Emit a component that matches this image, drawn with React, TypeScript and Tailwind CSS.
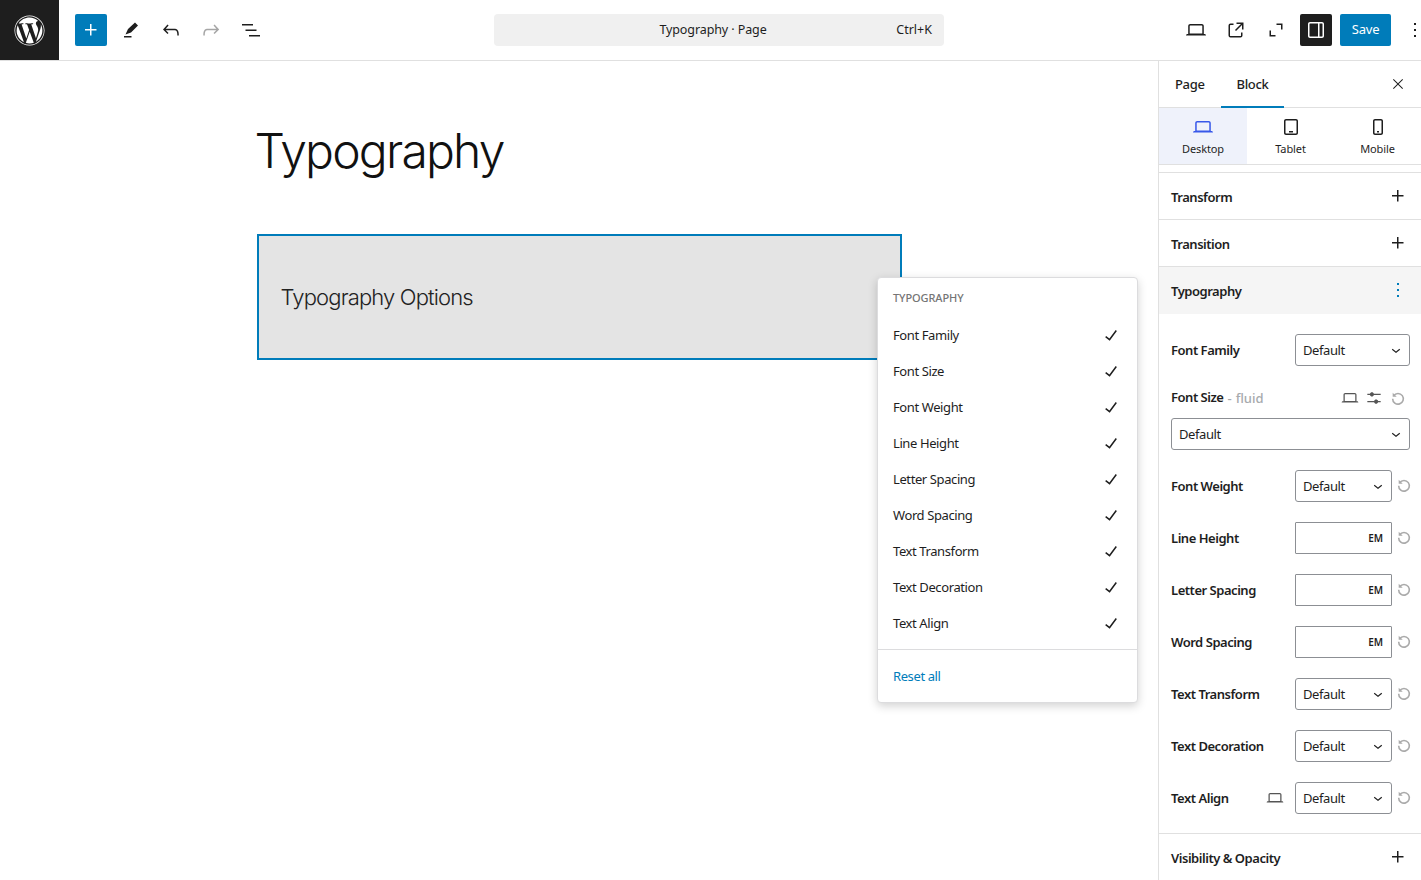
import type { ReactNode } from 'react';
import { FaWordpress } from 'react-icons/fa';

const paths = {
  plus: 'M11 12.5V17.5H12.5V12.5H17.5V11H12.5V6H11V11H6V12.5H11Z',
  pencil: 'M19 7.500 16 4.500 9 11 6.500 16.500 12 14.500zM5 18h7.500v1.500H5z',
  undo: 'M18.3 11.7c-.6-.6-1.4-.9-2.3-.9H6.7l2.9-3.3-1.1-1-4.5 5L8.5 16l1-1-2.7-2.7H16c.5 0 .9.2 1.3.5 1 1 1 3.4 1 4.5v.3h1.5v-.2c0-1.5 0-4.3-1.5-5.7z',
  redo: 'M15.6 6.5l-1.1 1 2.9 3.3H8c-.9 0-1.7.3-2.3.9-1.4 1.5-1.4 4.2-1.4 5.6v.2h1.5v-.3c0-1.1 0-3.5 1-4.5.3-.3.7-.5 1.3-.5h9.2L14.5 15l1.1 1.1 4.6-4.6-4.6-5z',
  list: 'M3 6h11v1.5H3V6Zm3.5 5.5h11V13h-11v-1.5ZM21 17H10v1.5h11V17Z',
  desktop: 'M20.5 16h-.7V8c0-1.1-.9-2-2-2H6.2c-1.1 0-2 .9-2 2v8h-.7c-.8 0-1.5.7-1.5 1.5h20c0-.8-.7-1.5-1.5-1.5zM5.700 8c0-.3.2-.5.5-.5h11.600c.3 0 .5.2.5.5v7.600H5.700V8z',
  tablet: 'M17 4H7c-1.1 0-2 .9-2 2v12c0 1.1.9 2 2 2h10c1.1 0 2-.9 2-2V6c0-1.1-.9-2-2-2zm.5 14c0 .3-.2.5-.5.5H7c-.3 0-.5-.2-.5-.5V6c0-.3.2-.5.5-.5h10c.3 0 .5.2.5.5v12zm-7.5-.5h4V16h-4v1.5z',
  mobile: 'M15 4H9c-1.1 0-2 .9-2 2v12c0 1.1.9 2 2 2h6c1.1 0 2-.9 2-2V6c0-1.1-.9-2-2-2zm.5 14c0 .3-.2.5-.5.5H9c-.3 0-.5-.2-.5-.5V6c0-.3.2-.5.5-.5h6c.3 0 .5.2.5.5v12zm-4.5-.5h2V16h-2v1.5z',
  external: 'M19.5 4.5h-7V6h4.44l-5.97 5.97 1.06 1.06L18 7.06v4.44h1.5v-7Zm-13 1a2 2 0 0 0-2 2v10a2 2 0 0 0 2 2h10a2 2 0 0 0 2-2v-3H17v3a.5.5 0 0 1-.5.5h-10a.5.5 0 0 1-.5-.5v-10a.5.5 0 0 1 .5-.5h3V5.5h-3Z',
  expand: 'M12.5 5.5v1.500h4.500v4.500h1.500v-6h-6zM7 12.500H5.500v6h6V17H7v-4.500z',
  sidebar: 'M18 4H6c-1.100 0-2 .9-2 2v12c0 1.100.9 2 2 2h12c1.100 0 2-.9 2-2V6c0-1.100-.9-2-2-2zm-4 14.500H6c-.3 0-.5-.2-.5-.5V6c0-.3.2-.5.5-.5h8v13zm4.500-.5c0 .3-.2.5-.5.5h-2.500v-13H18c.3 0 .5.2.5.5v12z',
  more: 'M13 19h-2v-2h2v2zm0-6h-2v-2h2v2zm0-6h-2V5h2v2z',
  close: 'm13.06 12 6.47-6.47-1.06-1.06L12 10.94 5.53 4.47 4.47 5.53 10.94 12l-6.47 6.47 1.06 1.06L12 13.06l6.47 6.47 1.06-1.06L13.06 12Z',
  check: 'M16.700 7.100l-6.300 8.500-3.300-2.500-.9 1.200 4.500 3.400L17.900 7.900z',
  chevron: 'M17.500 11.600L12 16l-5.500-4.400.9-1.200L12 14l4.500-3.600 1 1.200z',
  sliders: 'M14.500 13.800c-1.100 0-2.100.7-2.400 1.800H4V17h8.100c.3 1 1.300 1.800 2.400 1.800s2.100-.7 2.400-1.800H20v-1.500h-3.100c-.3-1-1.300-1.700-2.400-1.700zM11.900 7c-.3-1-1.300-1.800-2.400-1.800S7.400 6 7.100 7H4v1.500h3.100c.3 1 1.300 1.800 2.400 1.800s2.100-.7 2.400-1.800H20V7h-8.100z',
};

function Icon({ d, className = 'w-6 h-6' }: { d: string; className?: string }) {
  return (
    <svg viewBox="0 0 24 24" className={`${className} fill-current shrink-0`}>
      <path d={d} />
    </svg>
  );
}

function ResetIcon() {
  return (
    <svg viewBox="0 0 24 24" className="w-4 h-4 shrink-0 text-[#aaaaaa]" fill="none">
      <path d="M5.500 8.500A8 8 0 1 1 4 13" stroke="currentColor" strokeWidth="2.400" />
      <path d="M4 4v6h6z" fill="currentColor" />
    </svg>
  );
}

function SelectBox({ className }: { className: string }) {
  return (
    <div className={`${className} h-8 border border-[#8c8f94] rounded-[3px] bg-white flex items-center justify-between pl-[7px] pr-[4px] text-[13px] text-[#1e1e1e]`}>
      <span className="mt-[1px]">Default</span>
      <Icon d={paths.chevron} className="w-[18px] h-[18px]" />
    </div>
  );
}

function EmInput() {
  return (
    <div className="w-[97px] h-8 border border-[#8c8f94] rounded-[1px] flex items-center justify-end pr-2 text-[10px] font-semibold tracking-normal text-[#1e1e1e]">
      EM
    </div>
  );
}

function ControlRow({ label, children, device }: { label: string; children: ReactNode; device?: boolean }) {
  return (
    <div className="flex items-center h-8 mb-5 -mr-[2px]">
      <span className="font-semibold text-[13px] tracking-[-0.47px] text-[#1e1e1e] flex-1 mt-[1px]">{label}</span>
      {device && <Icon d={paths.desktop} className="w-5 h-5 mr-[10px] text-[#555]" />}
      {children}
      <div className="ml-[4px] -mt-[3px]">
        <ResetIcon />
      </div>
    </div>
  );
}

function CollapsedPanel({ title }: { title: string }) {
  return (
    <div className="h-[47px] shrink-0 px-3 flex items-center justify-between border-t border-[#e0e0e0]">
      <span className="font-semibold text-[13px] tracking-[-0.47px] text-[#1e1e1e] mt-[4px]">{title}</span>
      <Icon d={paths.plus} className="w-6 h-6 -mr-[1px] text-[#1e1e1e]" />
    </div>
  );
}

const options = ['Font Family', 'Font Size', 'Font Weight', 'Line Height', 'Letter Spacing', 'Word Spacing', 'Text Transform', 'Text Decoration', 'Text Align'];

export default function App() {
  return (
    <div className="h-[880px] w-[1421px] overflow-hidden bg-white flex flex-col font-['Noto_Sans',sans-serif] tracking-[-0.4px] text-[#1e1e1e]">
      {/* Top bar */}
      <header className="h-[61px] shrink-0 border-b border-[#e0e0e0] flex items-center">
        <div className="w-[59px] h-[60px] bg-[#1e1e1e] flex items-center justify-center text-white shrink-0">
          <FaWordpress className="w-[31px] h-[31px]" />
        </div>
        <button className="ml-4 w-8 h-8 bg-[#007cba] rounded-[2px] text-white flex items-center justify-center">
          <Icon d={paths.plus} />
        </button>
        <div className="ml-[12px] flex items-center gap-4">
          <Icon d={paths.pencil} />
          <Icon d={paths.undo} />
          <Icon d={paths.redo} className="w-6 h-6 text-[#a6a6a6]" />
          <Icon d={paths.list} />
        </div>
        <div className="ml-[231px] w-[450px] h-8 rounded-[4px] bg-[#f0f0f0] relative flex items-center justify-center pr-[12px] text-[12.500px] tracking-[-0.1px] text-[#1e1e1e]">
          <span>Typography · Page</span>
          <span className="absolute right-[12px] tracking-normal">Ctrl+K</span>
        </div>
        <div className="ml-auto flex items-center">
          <Icon d={paths.desktop} className="w-6 h-6 mr-4" />
          <Icon d={paths.external} className="w-6 h-6 mr-4" />
          <Icon d={paths.expand} className="w-6 h-6 mr-[12px]" />
          <button className="w-8 h-8 bg-[#1e1e1e] rounded-[2px] text-white flex items-center justify-center mr-2">
            <Icon d={paths.sidebar} />
          </button>
          <button className="w-[51px] h-8 bg-[#007cba] rounded-[2px] text-white text-[13px] tracking-[-0.2px] flex items-center justify-center">
            Save
          </button>
          <Icon d={paths.more} className="w-6 h-6 ml-[12px] -mr-[6px]" />
        </div>
      </header>

      <div className="flex-1 flex min-h-0">
        {/* Canvas */}
        <main className="flex-1 relative">
          <div className="w-[645px] mx-auto pt-[60px]">
            <h1 className="font-['Inter',sans-serif] font-light text-[48px] leading-[60px] text-[#111] tracking-[-1.8px] -ml-[2px]">Typography</h1>
            <div className="mt-[53px] h-[126px] bg-[#e4e4e4] border-2 border-[#007cba] flex items-center pl-[22px]">
              <span className="font-['Inter',sans-serif] font-light text-[22px] text-[#222] tracking-[-0.85px]">Typography Options</span>
            </div>
          </div>

          {/* Panel options menu */}
          <div className="absolute left-[877px] top-[216px] w-[261px] h-[426px] bg-white border border-[#dcdcde] rounded-[4px] shadow-[0_3px_10px_rgba(0,0,0,0.18)]">
            <div className="h-[40px] pl-[15px] pt-[12px] text-[11px] leading-[16px] font-medium text-[#757575] uppercase tracking-[-0.1px]">Typography</div>
            {options.map((name) => (
              <div key={name} className="h-9 pl-[15px] pr-[14px] flex items-center justify-between text-[13px] text-[#1e1e1e]">
                <span>{name}</span>
                <Icon d={paths.check} className="w-6 h-6 -mt-[2px]" />
              </div>
            ))}
            <div className="mt-[7px] border-t border-[#dcdcde] h-[53px] pl-[15px] pt-[2px] flex items-center text-[13px] text-[#007cba]">Reset all</div>
          </div>
        </main>

        {/* Sidebar */}
        <aside className="w-[263px] shrink-0 border-l border-[#e0e0e0] flex flex-col">
          <div className="h-[47px] shrink-0 border-b border-[#e0e0e0] flex items-center text-[13px] font-medium tracking-[-0.35px]">
            <span className="ml-4 pr-4 pt-[1px]">Page</span>
            <span className="h-full flex items-center px-4 pt-[1px] border-b-2 border-[#007cba] translate-y-[1px]">Block</span>
            <div className="ml-auto mr-[15px]">
              <Icon d={paths.close} className="w-4 h-4" />
            </div>
          </div>

          <div className="h-[57px] shrink-0 border-b border-[#e0e0e0] grid grid-cols-[88px_1fr_1fr] text-[11px] tracking-[-0.1px] text-[#1e1e1e]">
            <div className="bg-[#eff2fb] flex flex-col items-center justify-center">
              <Icon d={paths.desktop} className="w-6 h-6 text-[#3858e9]" />
              <span className="mt-[2px]">Desktop</span>
            </div>
            <div className="flex flex-col items-center justify-center">
              <Icon d={paths.tablet} />
              <span className="mt-[2px]">Tablet</span>
            </div>
            <div className="flex flex-col items-center justify-center">
              <Icon d={paths.mobile} />
              <span className="mt-[2px]">Mobile</span>
            </div>
          </div>

          <div className="h-[7px] shrink-0" />
          <CollapsedPanel title="Transform" />
          <CollapsedPanel title="Transition" />

          <div className="h-[48px] shrink-0 bg-[#f5f5f5] border-t border-[#e0e0e0] px-3 flex items-center justify-between">
            <span className="font-semibold text-[13px] tracking-[-0.47px] mt-[2px]">Typography</span>
            <Icon d={paths.more} className="w-6 h-6 text-[#007cba] -mr-[1px] -mt-[2px]" />
          </div>

          <div className="pl-3 pr-[11px] pt-5 flex-1 min-h-0">
            <div className="flex items-center h-8 mb-5">
              <span className="font-semibold text-[13px] tracking-[-0.47px] flex-1 mt-[1px]">Font Family</span>
              <SelectBox className="w-[115px]" />
            </div>
            <div className="flex items-center h-6">
              <span className="font-semibold text-[13px] tracking-[-0.47px]">Font Size</span>
              <span className="ml-[4px] text-[13px] text-[#a7aaad] font-medium mt-[2px] tracking-normal">-</span>
              <span className="ml-[4px] text-[13px] text-[#a7aaad] font-medium mt-[2px] tracking-normal">fluid</span>
              <div className="ml-auto flex items-center text-[#555]">
                <div className="w-6 flex justify-center"><Icon d={paths.desktop} className="w-5 h-5" /></div>
                <div className="w-6 flex justify-center"><Icon d={paths.sliders} className="w-5 h-5" /></div>
                <div className="w-6 flex justify-center"><ResetIcon /></div>
              </div>
            </div>
            <SelectBox className="w-full mt-2 mb-5" />
            <ControlRow label="Font Weight"><SelectBox className="w-[97px]" /></ControlRow>
            <ControlRow label="Line Height"><EmInput /></ControlRow>
            <ControlRow label="Letter Spacing"><EmInput /></ControlRow>
            <ControlRow label="Word Spacing"><EmInput /></ControlRow>
            <ControlRow label="Text Transform"><SelectBox className="w-[97px]" /></ControlRow>
            <ControlRow label="Text Decoration"><SelectBox className="w-[97px]" /></ControlRow>
            <ControlRow label="Text Align" device><SelectBox className="w-[97px]" /></ControlRow>
          </div>

          <CollapsedPanel title="Visibility & Opacity" />
        </aside>
      </div>
    </div>
  );
}
